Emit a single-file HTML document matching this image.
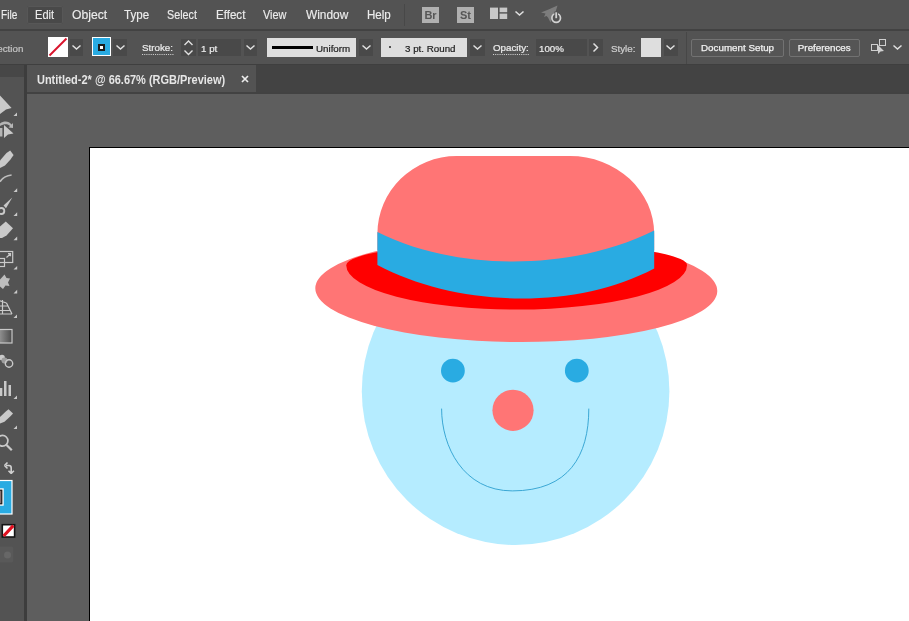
<!DOCTYPE html>
<html><head><meta charset="utf-8"><title>Untitled-2</title>
<style>
html,body{margin:0;padding:0;}
body{width:909px;height:621px;overflow:hidden;position:relative;background:#5e5e5e;font-family:"Liberation Sans",sans-serif;color:#dcdcdc;}
.abs{position:absolute;}
#menubar{left:0;top:0;width:909px;height:30px;will-change:transform;}
#menubg{left:0;top:0;width:909px;height:30px;background:#535353;}
#ctrlbg{left:0;top:31px;width:909px;height:33px;background:#535353;}
#menubar span{position:absolute;transform-origin:0 0;top:7px;font-size:12.3px;line-height:16px;color:#ececec;-webkit-text-stroke:0.15px #ececec;white-space:nowrap;}
#ctrl{left:0;top:31px;width:909px;height:33px;will-change:transform;}
#ctrl .t{position:absolute;font-size:9px;line-height:14px;top:10.600px;white-space:nowrap;color:#ececec;-webkit-text-stroke:0.2px currentColor;transform-origin:0 0;transform:scaleX(1.085);}
.dk{position:absolute;background:#494949;top:7.500px;height:17.700px;}
.lt{position:absolute;background:#dedede;top:6.500px;height:19.500px;}
.btn{position:absolute;top:7.500px;height:16px;border:1px solid #727272;border-radius:2px;font-size:9px;-webkit-text-stroke:0.25px #f0f0f0;line-height:16.500px;background:#555;text-align:center;color:#f0f0f0;}
#ctrl .dot{border-bottom:1px dotted #cfcfcf;line-height:11px;top:12px;}
#tabbar{left:0;top:65px;width:909px;height:28.500px;background:#434343;}
#tab{left:27px;top:65px;width:228.500px;height:27px;will-change:transform;}
#tabbg{left:27px;top:65px;width:228.500px;height:27px;background:#535353;}
#tools{left:0;top:77px;width:24px;height:544px;background:#535353;}
</style></head><body>
<div id="menubg" class="abs"></div><div id="ctrlbg" class="abs"></div>
<div id="menubar" class="abs">
<span style="left:1.0px;transform:scaleX(0.820)">File</span>
<div class="abs" style="left:27px;top:6px;width:35.700px;height:18.400px;background:#494949;border-radius:2px;box-shadow:inset 0 0 0 1px #575757;"></div>
<span style="left:35.1px;transform:scaleX(0.900)">Edit</span>
<span style="left:71.7px;transform:scaleX(0.990)">Object</span>
<span style="left:123.7px;transform:scaleX(0.940)">Type</span>
<span style="left:167.3px;transform:scaleX(0.875)">Select</span>
<span style="left:216.2px;transform:scaleX(0.940)">Effect</span>
<span style="left:263.4px;transform:scaleX(0.890)">View</span>
<span style="left:305.7px;transform:scaleX(0.967)">Window</span>
<span style="left:367.2px;transform:scaleX(0.940)">Help</span>
<div class="abs" style="left:404px;top:4px;width:1px;height:22px;background:#484848;"></div>
<div class="abs" style="left:422px;top:7px;width:17px;height:16px;background:#b0b0b0;color:#565656;font-size:11px;font-weight:bold;line-height:16px;text-align:center;">Br</div>
<div class="abs" style="left:457px;top:7px;width:17px;height:16px;background:#b0b0b0;color:#565656;font-size:11px;font-weight:bold;line-height:16px;text-align:center;">St</div>
<svg class="abs" style="left:490px;top:7px" width="18" height="13"><rect x="0" y="0.600" width="8" height="11.400" fill="#c8c8c8"/><rect x="9.600" y="0.600" width="7.600" height="4.600" fill="#c8c8c8"/><rect x="9.600" y="6.600" width="7.600" height="5.400" fill="#c8c8c8"/></svg>
<svg class="abs" style="left:514px;top:10px" width="11" height="7"><path d="M1.5 1.5 L5.5 5 L9.5 1.5" fill="none" stroke="#e0e0e0" stroke-width="1.6"/></svg>
<svg class="abs" style="left:539px;top:4px" width="24" height="21" viewBox="539 4 24 21"><path d="M541 12.500 L548.500 9.500 L557.500 5.500 L555.500 12 L552 17 L550.500 22.500 L548 17.500 L546.500 16 L544 17 L545.500 13.500 Z" fill="#7d7d7d"/><circle cx="556.200" cy="18" r="4.300" fill="#535353" stroke="#d2d2d2" stroke-width="1.700"/><rect x="554.400" y="11.500" width="3.600" height="6.500" fill="#535353"/><rect x="555.300" y="12.300" width="1.800" height="5.900" fill="#d2d2d2"/></svg>
</div>
<div class="abs" style="left:0;top:29.300px;width:909px;height:2px;background:#424242;"></div>
<div id="ctrl" class="abs">
<span class="t" style="left:-32.500px;color:#c4c4c4">No Selection</span>
<div class="abs" style="left:48px;top:6px;width:20px;height:20px;background:#fff;overflow:hidden;"><svg width="20" height="20"><path d="M1.500 18.500 L18.500 1.500" stroke="#d9142c" stroke-width="2"/></svg></div>
<div class="dk" style="left:70px;width:13px;"></div>
<svg class="abs" style="left:71px;top:13px" width="11" height="7"><path d="M1.5 1.5 L5.5 5 L9.5 1.5" fill="none" stroke="#e0e0e0" stroke-width="1.5"/></svg>
<div class="abs" style="left:92px;top:6px;width:17px;height:17px;background:#29abe2;border:1px solid #fff;"></div>
<div class="abs" style="left:98px;top:13px;width:3px;height:3px;background:#fff;border:2px solid #1a1a1a;"></div>
<div class="dk" style="left:113px;width:14px;"></div>
<svg class="abs" style="left:115px;top:13px" width="11" height="7"><path d="M1.5 1.5 L5.5 5 L9.5 1.5" fill="none" stroke="#e0e0e0" stroke-width="1.5"/></svg>
<span class="t dot" style="left:142px;">Stroke:</span>
<div class="dk" style="left:181px;width:60px;"></div>
<div class="abs" style="left:195.500px;top:6px;width:2.300px;height:21px;background:#535353;"></div>
<svg class="abs" style="left:183px;top:8px" width="11" height="18"><path d="M1.5 6 L5.5 2 L9.5 6 M1.5 11.5 L5.5 15.5 L9.5 11.5" fill="none" stroke="#e0e0e0" stroke-width="1.4"/></svg>
<span class="t" style="left:201px;">1 pt</span>
<div class="dk" style="left:244px;width:13px;"></div>
<svg class="abs" style="left:245px;top:13px" width="11" height="7"><path d="M1.5 1.5 L5.5 5 L9.5 1.5" fill="none" stroke="#e0e0e0" stroke-width="1.5"/></svg>
<div class="lt" style="left:267px;width:89px;"></div>
<div class="abs" style="left:272px;top:15px;width:41px;height:3px;background:#000;"></div>
<span class="t" style="left:316px;color:#222;">Uniform</span>
<div class="dk" style="left:359px;width:14px;"></div>
<svg class="abs" style="left:361px;top:13px" width="11" height="7"><path d="M1.5 1.5 L5.5 5 L9.5 1.5" fill="none" stroke="#e0e0e0" stroke-width="1.5"/></svg>
<div class="lt" style="left:381px;width:86px;"></div>
<div class="abs" style="left:389px;top:15px;width:2px;height:2px;background:#222;border-radius:1px;"></div>
<span class="t" style="left:405px;color:#222;">3 pt. Round</span>
<div class="dk" style="left:470px;width:15px;"></div>
<svg class="abs" style="left:472px;top:13px" width="11" height="7"><path d="M1.5 1.5 L5.5 5 L9.5 1.5" fill="none" stroke="#e0e0e0" stroke-width="1.5"/></svg>
<span class="t dot" style="left:493px;">Opacity:</span>
<div class="dk" style="left:536px;width:51px;"></div>
<span class="t" style="left:539px;">100%</span>
<div class="dk" style="left:589px;width:14px;"></div>
<svg class="abs" style="left:592px;top:11px" width="8" height="11"><path d="M1.5 1.5 L5.5 5.5 L1.5 9.5" fill="none" stroke="#e0e0e0" stroke-width="1.5"/></svg>
<span class="t" style="left:611px;color:#cfcfcf">Style:</span>
<div class="lt" style="left:641px;width:20px;"></div>
<div class="dk" style="left:664px;width:14px;"></div>
<svg class="abs" style="left:665px;top:13px" width="11" height="7"><path d="M1.5 1.5 L5.5 5 L9.5 1.5" fill="none" stroke="#e0e0e0" stroke-width="1.5"/></svg>
<div class="abs" style="left:686px;top:1px;width:1px;height:32px;background:#474747;"></div>
<div class="btn" style="left:691px;width:91px;"><span style="display:inline-block;transform:scaleX(1.09)">Document Setup</span></div>
<div class="btn" style="left:789px;width:69px;"><span style="display:inline-block;transform:scaleX(1.09)">Preferences</span></div>
<svg class="abs" style="left:870px;top:7px" width="18" height="18"><rect x="1.5" y="6.5" width="6" height="6" fill="none" stroke="#cfcfcf"/><rect x="9.5" y="1.5" width="6" height="6" fill="none" stroke="#cfcfcf"/><path d="M8 7 L8 16 L10.5 13.5 L14 13 Z" fill="#cfcfcf"/></svg>
<svg class="abs" style="left:892px;top:13px" width="11" height="7"><path d="M1.5 1.5 L5.5 5 L9.5 1.5" fill="none" stroke="#e0e0e0" stroke-width="1.5"/></svg>
</div>
<div class="abs" style="left:0;top:64px;width:909px;height:1px;background:#3f3f3f;"></div>
<div id="tabbar" class="abs"></div>
<div id="tabbg" class="abs"></div>
<div id="tab" class="abs"><span class="abs" style="left:9.500px;top:8px;font-size:12px;font-weight:bold;line-height:14px;white-space:nowrap;color:#e6e6e6;transform-origin:0 0;transform:scaleX(0.914);">Untitled-2* @ 66.67% (RGB/Preview)</span>
<svg class="abs" style="left:214px;top:10px" width="8" height="8"><path d="M1 1 L7 7 M7 1 L1 7" stroke="#ececec" stroke-width="1.700"/></svg></div>
<div class="abs" style="left:0;top:91.500px;width:909px;height:2px;background:#424242;"></div>
<div class="abs" style="left:0;top:65px;width:24px;height:12.300px;background:#474747;"></div>
<div id="tools" class="abs"></div>
<div class="abs" style="left:24.200px;top:65px;width:2.800px;height:556px;background:#3d3d3d;"></div>
<svg class="abs" style="left:0;top:77px" width="24" height="544" viewBox="0 77 24 544">
<g fill="#c9c9c9" stroke="none">
<path d="M0 95.500 L11.600 108 L6 109.500 L0 114 Z"/>
<path d="M13.500 116 L17 112.500 L17 116 Z"/>
<path d="M4 125 L13.500 133.600 L8 134.600 L4 138 Z"/>
<path d="M0 123.500 C4 120.500 9 121 11.500 124.500 L13 123 L13 128 L8.500 127.500 L10 126 C8 123.500 4 123.500 0 126 Z" fill="#b5b5b5"/>
<rect x="0" y="128" width="2.400" height="8.500" fill="#b5b5b5"/>
<path d="M0 160.500 L6.500 153 L10.200 150.500 L13.600 155 L10.500 159.500 L5 165.500 L0 168 Z"/>
<path d="M13.500 192 L17.200 188.300 L17.200 192 Z"/>
<path d="M12.300 197.500 L3.500 205.500 L6 208.200 Z"/>
<path d="M13.500 216 L17.200 212.300 L17.200 216 Z"/>
<path d="M0 226.500 L5.800 221.500 L13 228.200 L6.500 235.500 L2 238 L0 238 Z"/>
<path d="M13.500 240.300 L17.200 236.600 L17.200 240.300 Z"/>
<path d="M13.500 269.600 L17.200 265.900 L17.200 269.600 Z"/>
<path d="M0 279.500 L4.500 274.500 L6.500 278 L10 278.500 L8 282.500 L9.500 286 L5.500 285.500 L3 289 L0 286.500 Z" fill="#bdbdbd"/>
<path d="M13.500 293.500 L17.200 289.800 L17.200 293.500 Z"/>
<path d="M13.500 318 L17 314.500 L17 318 Z"/>
<path d="M13.500 399 L17 395.500 L17 399 Z"/>
<path d="M0 417 L5.800 411.500 L8.500 409.300 L13 413.600 L10.200 416.400 L4.500 421.800 L0 423.600 Z"/>
<path d="M13.500 429 L17 425.500 L17 429 Z"/>
</g>
<path d="M0 181.800 C2 178.500 6 175.700 11.600 175" fill="none" stroke="#bdbdbd" stroke-width="1.6"/>
<g fill="none" stroke="#c9c9c9" stroke-width="1.200">
<rect x="-2" y="258.500" width="6.500" height="8"/>
<rect x="-2" y="251.500" width="14.700" height="11"/>
<path d="M6.500 257.500 L10.500 253.700 M8 253.700 L10.500 253.700 L10.500 256.200"/>
<path d="M-1 314 L12 314 M-1 310.500 L10 310.500 M-1 306 L7.500 306 M2.500 300 L2.500 314 M6.500 303 L12 314 M-1 300.500 L6.500 303"/>
</g>
<defs><linearGradient id="gr" x1="0" y1="0" x2="1" y2="0"><stop offset="0" stop-color="#9a9a9a"/><stop offset="1" stop-color="#4a4a4a"/></linearGradient></defs>
<rect x="-2" y="329.500" width="14" height="13.500" fill="url(#gr)" stroke="#c9c9c9" stroke-width="1.200"/>
<circle cx="1.300" cy="211" r="3" fill="none" stroke="#c9c9c9" stroke-width="1.900"/>
<circle cx="2" cy="357.500" r="2.800" fill="#c9c9c9"/>
<circle cx="4.500" cy="360.500" r="3" fill="#9c9c9c"/>
<circle cx="9" cy="363.500" r="3.700" fill="none" stroke="#c9c9c9" stroke-width="1.400"/>
<g fill="#c9c9c9">
<rect x="0" y="388" width="2.300" height="8"/>
<rect x="4" y="381" width="2.500" height="15"/>
<rect x="8.500" y="385" width="2.500" height="11"/>
</g>
<circle cx="2.500" cy="440.800" r="5.400" fill="none" stroke="#c9c9c9" stroke-width="1.700"/>
<path d="M6.500 445 L11.800 450.200" stroke="#c9c9c9" stroke-width="2.200" fill="none"/>
<path d="M6 465.500 L9 465.500 Q11.200 465.500 11.200 468 L11.200 472 M4.500 465.500 L7.500 462.500 M4.500 465.500 L7.500 468.500 M11.200 473.500 L8.500 470.800 M11.200 473.500 L13.900 470.800" fill="none" stroke="#d0d0d0" stroke-width="1.600"/>
<rect x="-2" y="480.500" width="14" height="33.500" fill="#29abe2" stroke="#fff" stroke-width="1.200"/>
<rect x="-2" y="488.300" width="5.700" height="17.400" fill="#fff"/><rect x="-2" y="489.600" width="4.400" height="14.800" fill="#1e1e1e"/><rect x="-2" y="490.800" width="3.200" height="12.400" fill="#8a7070"/>
<rect x="2.300" y="524.700" width="12.300" height="12.300" fill="#fff" stroke="#141414" stroke-width="1.600"/>
<path d="M3.600 536 L13.300 525.700" stroke="#e01020" stroke-width="3.200"/>
<rect x="-2" y="546.500" width="15.300" height="16" rx="2" fill="#595959"/>
<circle cx="7.500" cy="555" r="3.500" fill="#676767"/>
</svg>
<svg class="abs" style="left:89px;top:147px" width="820" height="474" viewBox="89 147 820 474">
<rect x="89.5" y="147.5" width="830" height="480" fill="#fff" stroke="#000" stroke-width="1"/>
<circle cx="515.6" cy="391.2" r="153.8" fill="#b5ecff"/>
<ellipse cx="516.3" cy="289.600" rx="201" ry="52.500" fill="#ff7575" transform="rotate(0.4 516.3 289.600)"/>
<path d="M346.200 265.300 A170.400 22.500 0 0 1 687 265 A170.400 44.400 0 0 1 346.200 265.300 Z" fill="#ff0000"/>
<path d="M377.400 250 L377.400 233.700 A79.400 77.700 0 0 1 456.800 156.100 L569.900 156.100 A84.200 77.700 0 0 1 654.200 233.900 L654.200 250 Q516 310 377.400 250 Z" fill="#ff7575"/>
<path d="M377.400 232 C457.4 272.3 574.2 270.8 654.200 230.500 L654.200 268.400 C574.2 310.7 457.4 307.3 377.400 265 Z" fill="#29abe2"/>
<circle cx="452.900" cy="370.700" r="11.900" fill="#29abe2"/>
<circle cx="576.800" cy="370.700" r="11.900" fill="#29abe2"/>
<circle cx="513" cy="410.300" r="20.600" fill="#ff7575"/>
<path d="M441.600 408.600 C441.600 446.200 463.100 490.900 512.300 490.900 C568.900 490.900 588.800 455.600 588.800 408.600" fill="none" stroke="#2d9fcf" stroke-width="0.9"/>
</svg>
</body></html>
